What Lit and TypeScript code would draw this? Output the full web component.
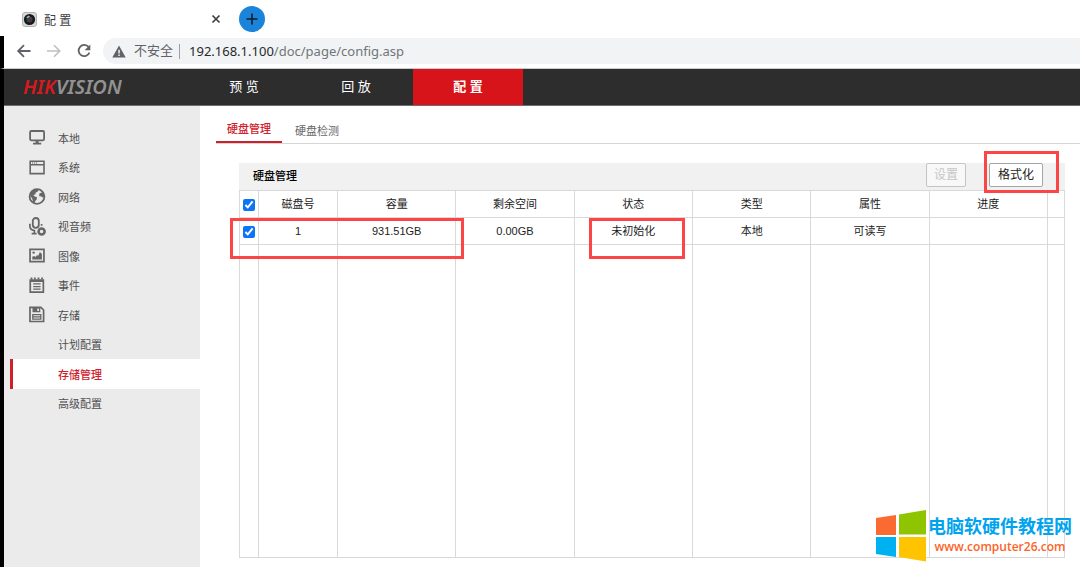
import { LitElement, html, svg, css, nothing } from "lit";
import { customElement, property, state } from "lit/decorators.js";
import { classMap } from "lit/directives/class-map.js";

const ICONS: Record<string, unknown> = {
  local: svg`<rect x="1.1" y="2" width="14" height="9.3" rx="1.2" fill="none" stroke="currentColor" stroke-width="1.8"/><path d="M6.600 11h3v3h-3zM4 13.700h8.200v1.800H4z"/>`,
  system: svg`<path d="M.4 1.400h15.400v14H.4zM2 3v2.100h12.200V3zm0 3.500v7.300h12.200V6.500z" fill-rule="evenodd"/><path d="M3 3.500h1.200v1H3zM5 3.500h1.200v1H5zM7 3.500h1.200v1H7z"/>`,
  network: svg`<circle cx="8" cy="8.500" r="7.400" fill="none" stroke="currentColor" stroke-width="1.800"/><path d="M2.200 3.600 6 1.200l3.600.5-.8 1.900-2 .9-.4 1.800-2 .7.9 1.300 2.700.9-.3 2.300-1.500 1.600-.3 1.800-2-1.100-.7-3.200L1.200 8zM10.500 5.300l3.300-1 1.300 2.500-.3 2.200-1.500.4-1.200-1.200-2 .1z"/>`,
  av: svg`<rect x="3.800" y="0" width="6" height="9.800" rx="3" fill="none" stroke="currentColor" stroke-width="1.800"/><path d="M.9 5.800v2.300c0 2.400 1.500 4.200 4.500 4.500v2.900M2.600 15.700h5M12.600 6v1.800" fill="none" stroke="currentColor" stroke-width="1.700"/><circle cx="12.600" cy="13.500" r="3" fill="none" stroke="currentColor" stroke-width="2.600"/>`,
  image: svg`<path d="M.2 1.500h15.600v14H.2zM1.900 3.200v10.600h12.200V3.200z" fill-rule="evenodd"/><path d="M3.300 12.600v-2.800l1.800-.9 1.500 1.200 1.500-2 1 .9 1.800-4 2 2v5.600z"/><circle cx="4.600" cy="5.600" r="1.200"/>`,
  event: svg`<path d="M.4 2.300h14.800v13.700H.4zM2.100 5v9.300h11.400V5z" fill-rule="evenodd"/><path d="M1.600.4h1.800v2H1.600zM5 .4h1.800v2H5zM8.600.4h1.800v2H8.600zM12.200.4H14v2h-1.800zM4.200 6.300h7.400v1.300H4.200zM4.200 8.900h7.400v1.300H4.200zM4.200 11.500h7.400v1.300H4.200z"/>`,
  storage: svg`<path d="M1 1.300h10.900L14.600 4v11.500H1z" fill="none" stroke="currentColor" stroke-width="1.700"/><path d="M3.500 1.300h7.800V6.300H3.500zM8.300 2.400v2.500H10V2.400z" fill-rule="evenodd"/><path d="M3.800 8.600h8v4.600h-8zM4 10.900h8" fill="none" stroke="currentColor" stroke-width="1.300"/>`,
};

interface MenuItem { label: string; icon?: string; active?: boolean; }

const MENU: MenuItem[] = [
  { label: "本地", icon: "local" },
  { label: "系统", icon: "system" },
  { label: "网络", icon: "network" },
  { label: "视音频", icon: "av" },
  { label: "图像", icon: "image" },
  { label: "事件", icon: "event" },
  { label: "存储", icon: "storage" },
  { label: "计划配置" },
  { label: "存储管理", active: true },
  { label: "高级配置" },
];

@customElement("browser-bar")
class BrowserBar extends LitElement {
  static styles = css`
    :host { display: block; background: #fff; }
    .tabs { display: flex; align-items: center; height: 36px; padding: 2px 0 0 22px; box-sizing: border-box; }
    .tab { display: flex; align-items: center; width: 200px; margin-right: 17px; color: #3c4043; font-size: 12px; }
    .title { flex: 1; margin-left: 7px; }
    button { border: 0; padding: 0; background: none; color: #5f6368; display: flex; align-items: center; justify-content: center; }
    .close { width: 12px; height: 12px; color: #3c4043; }
    .add { width: 26px; height: 26px; border-radius: 50%; background: #1a83da; color: #14202c; }
    .toolbar { display: flex; align-items: center; height: 33px; padding: 0 0 2px 12px; box-sizing: border-box; border-left: 4px solid #000; }
    .frame { border-bottom: 1px solid #c9cacc; }
    .nav { width: 16px; height: 16px; margin-right: 14px; }
    .nav.off { color: #bdc0c3; }
    .nav.reload { margin-right: 11px; }
    .address { flex: 1; display: flex; align-items: center; height: 26px; padding-left: 9px; border-radius: 13px 0 0 13px; background: #f1f3f4; font-size: 13px; line-height: 16px; color: #5f6368; }
    .warn { margin-right: 8px; }
    .sep { width: 1px; height: 15px; margin: 0 9px 0 6px; background: #9aa0a6; }
    .url { flex: 1; font-family: "Noto Sans", sans-serif; color: #70757a; }
    .host { color: #26282b; }
  `;
  render() {
    return html`
      <div class="tabs">
        <div class="tab">
          <svg width="15" height="15" viewBox="0 0 15 15">
            <rect x=".5" y=".5" width="14" height="14" rx="2.500" fill="#d9d7d6" stroke="#b5b3b2" />
            <circle cx="7.500" cy="7.500" r="5.600" fill="#17191b" />
            <circle cx="7.500" cy="7.500" r="3" fill="#33484f" />
            <path d="M4 5.500 6.500 3.500 8 4.500 6 6z" fill="#a8b0b2" />
            <circle cx="8.600" cy="8.300" r="1.400" fill="#7b2226" />
          </svg>
          <span class="title">配 置</span>
          <button class="close" aria-label="关闭标签页">
            <svg width="10" height="10" viewBox="0 0 10 10"><path d="M1.500 1.500l7 7m0-7l-7 7" stroke="currentColor" stroke-width="1.700" /></svg>
          </button>
        </div>
        <button class="add" aria-label="新标签页">
          <svg width="12" height="12" viewBox="0 0 12 12"><path d="M6 .5v11M.5 6h11" stroke="currentColor" stroke-width="1.700" /></svg>
        </button>
      </div>
      <div class="toolbar frame">
        <button class="nav" aria-label="后退"><svg width="16" height="16" viewBox="0 0 16 16" fill="none" stroke="currentColor" stroke-width="1.800"><path d="M14.500 8H2.500M8 2.200 2.200 8 8 13.800" /></svg></button>
        <button class="nav off" aria-label="前进"><svg width="16" height="16" viewBox="0 0 16 16" fill="none" stroke="currentColor" stroke-width="1.600"><path d="M1 8h12M8 2.200 13.800 8 8 13.800" /></svg></button>
        <button class="nav reload" aria-label="刷新"><svg width="16" height="16" viewBox="0 0 16 16"><path d="M12.600 4A5.600 5.600 0 1 0 13.400 9.700" fill="none" stroke="currentColor" stroke-width="1.800" /><path d="M14.300 1.500v5.700H8.600z" fill="currentColor" /></svg></button>
        <div class="address">
          <svg class="warn" width="14" height="13" viewBox="0 0 14 13"><path d="M7 .5 13.700 12.500H.3z" fill="#5f6368" /><path d="M6.300 4.800h1.500v3.700H6.300zM6.300 9.500h1.500V11H6.300z" fill="#f1f3f4" /></svg>
          <span>不安全</span><i class="sep"></i>
          <span class="url"><span class="host">192.168.1.100</span>/doc/page/config.asp</span>
        </div>
      </div>`;
  }
}

@customElement("side-menu")
class SideMenu extends LitElement {
  static styles = css`
    :host { display: block; flex: 0 0 196px; background: #ebebeb; }
    .list { display: grid; grid-auto-rows: 1fr; height: 295px; margin: 17px 0 0; padding: 0; list-style: none; }
    .item { display: flex; }
    .link { flex: 1; display: flex; align-items: center; gap: 12px; margin-left: 6px; padding-left: 16px; border-left: 3px solid transparent; color: #505050; font-size: 11px; text-decoration: none; }
    .link.active { background: #fff; border-color: #d0202c; color: #d0202c; font-weight: 500; }
    .icon { width: 17px; height: 17px; color: #666; fill: currentColor; overflow: visible; }
  `;
  render() {
    return html`<nav><ul class="list">${MENU.map((m) => html`
      <li class="item"><a href="#" class=${classMap({ link: true, active: !!m.active })}>
        <svg class="icon" viewBox="0 0 17 17" aria-hidden="true">${m.icon ? ICONS[m.icon] : nothing}</svg>
        <span>${m.label}</span></a></li>`)}</ul></nav>`;
  }
}

@customElement("disk-panel")
class DiskPanel extends LitElement {
  @property({ attribute: false }) columns = ["磁盘号", "容量", "剩余空间", "状态", "类型", "属性", "进度"];
  @state() private rows = [["1", "931.51GB", "0.00GB", "未初始化", "本地", "可读写", ""]];

  static styles = css`
    :host { flex: 1; display: flex; flex-direction: column; font-size: 11px; color: #222; }
    .head { display: flex; align-items: center; height: 27px; padding: 0 22px 3px 14px; box-sizing: border-box; background: #f1f1f1; }
    .heading { flex: 1; margin: 0; font-size: 11px; font-weight: 500; color: #000; }
    .btn { height: 24px; padding: 0 8px; border: 1px solid #a3a6a3; border-radius: 2px; background: #fff; color: #222; font: inherit; font-size: 12px; line-height: 20px; }
    .btn:disabled { padding: 0 7px; background: #f8f8f8; border-color: #c4c4c4; color: #c6c6c6; }
    .wrap { position: relative; margin-left: 23px; display: flex; }
    .table { flex: 1; width: 100%; table-layout: fixed; border-collapse: collapse; }
    .check { width: 19px; }
    .num { width: 79px; }
    .tail { width: 17px; }
    .cell { position: relative; height: 26px; padding: 0; border: 1px solid #d9d9d9; font-weight: 400; text-align: center; line-height: 16px; box-sizing: border-box; }
    .row { height: 27px; }
    .cell.fill { height: auto; }
    .box { display: block; width: 12px; height: 12px; margin: 2px auto 0; accent-color: #0b75f5; }
    .mark { position: absolute; box-sizing: border-box; border: 3px solid #fa4646; pointer-events: none; z-index: 1; }
    .mark.disk { left: -10px; top: 0; width: 234px; height: 41px; }
    .mark.status { left: 14px; top: 0; width: 96px; height: 41px; }
    .mark.format { left: -5px; top: -12px; width: 75px; height: 42px; }
  `;
  render() {
    return html`
      <div class="head">
        <h2 class="heading">硬盘管理</h2>
        <button class="btn" disabled>设置</button>
        <span class="wrap"><button class="btn">格式化</button><i class="mark format"></i></span>
      </div>
      <table class="table">
        <colgroup><col class="check" /><col class="num" />${this.columns.slice(1).map(() => html`<col />`)}<col class="tail" /></colgroup>
        <thead><tr class="row">
          <th class="cell"><input class="box" type="checkbox" checked aria-label="全选" /></th>
          ${this.columns.map((c) => html`<th class="cell">${c}</th>`)}<th class="cell"></th>
        </tr></thead>
        <tbody>
          ${this.rows.map((r) => html`<tr class="row">
            <td class="cell"><input class="box" type="checkbox" checked aria-label="磁盘 1" /><i class="mark disk"></i></td>
            ${r.map((v, i) => html`<td class="cell">${v}${i === 3 ? html`<i class="mark status"></i>` : nothing}</td>`)}<td class="cell"></td>
          </tr>`)}
          <tr><td class="cell fill"></td>${this.columns.map(() => html`<td class="cell fill"></td>`)}<td class="cell fill"></td></tr>
        </tbody>
      </table>`;
  }
}

@customElement("site-badge")
class SiteBadge extends LitElement {
  static styles = css`
    :host { position: absolute; right: 8px; bottom: 5px; display: flex; align-items: center; gap: 2px; white-space: nowrap; }
    .name { font-size: 18px; line-height: 22px; font-weight: 700; color: #00a3ee; }
    .site { display: block; text-align: center; font: 600 12px/18px "Open Sans", sans-serif; color: #fb6428; text-decoration: none; }
  `;
  render() {
    return html`
      <svg width="50" height="52" viewBox="0 0 50 52" aria-hidden="true">
        <path d="M0 8 20 5v20H0z" fill="#fb6a30" /><path d="M23 4.500 50 0v24.500H23z" fill="#8fc400" />
        <path d="M0 27h20v20L0 44z" fill="#00b1f1" /><path d="M23 27h27v24.500L23 47z" fill="#ffc400" />
      </svg>
      <div><div class="name">电脑软硬件教程网</div><a class="site" href="#">www.computer26.com</a></div>`;
  }
}

@customElement("app-root")
class AppRoot extends LitElement {
  static styles = css`
    :host { position: relative; display: flex; flex-direction: column; min-height: 100vh; background: #fff; font-family: "Liberation Sans", "Noto Sans CJK SC", sans-serif; }
    .site { flex: 1; display: flex; flex-direction: column; border-left: 4px solid #000; }
    .top { display: flex; align-items: stretch; height: 37px; box-sizing: border-box; background: #2d2d2d; border-bottom: 1px solid #6d6d6d; }
    .logo { flex: 0 0 166px; padding-left: 19px; box-sizing: border-box; font: italic 600 20px/36px "Noto Sans", sans-serif; color: #929292; }
    .hik { color: #d71920; }
    .menu { display: flex; gap: 2px; margin-left: 19px; }
    .link { width: 110px; font-size: 13px; line-height: 36px; text-align: center; color: #fff; text-decoration: none; }
    .link.active { background: #d7141a; font-weight: 700; }
    .body { flex: 1; display: flex; }
    .main { flex: 1; min-width: 0; display: flex; flex-direction: column; }
    .tabs { display: flex; gap: 2px; height: 38px; margin-left: 16px; box-sizing: border-box; border-bottom: 1px solid #d6d6d6; }
    .tab { padding: 0 11px; font-size: 11px; line-height: 50px; color: #666; text-decoration: none; }
    .tab.active { line-height: 46px; height: 35px; border-bottom: 2px solid #d0202c; color: #d0202c; font-weight: 500; }
    .panel { margin: 19px 15px 9px 39px; }
  `;
  render() {
    return html`
      <browser-bar></browser-bar>
      <div class="site">
        <header class="top">
          <div class="logo"><span class="hik">HIK</span>VISION</div>
          <nav class="menu">
            <a class="link" href="#">预 览</a>
            <a class="link" href="#">回 放</a>
            <a class="link active" href="#">配 置</a>
          </nav>
        </header>
        <div class="body">
          <side-menu></side-menu>
          <main class="main">
            <nav class="tabs">
              <a class="tab active" href="#">硬盘管理</a>
              <a class="tab" href="#">硬盘检测</a>
            </nav>
            <disk-panel class="panel"></disk-panel>
          </main>
        </div>
      </div>
      <site-badge></site-badge>`;
  }
}
